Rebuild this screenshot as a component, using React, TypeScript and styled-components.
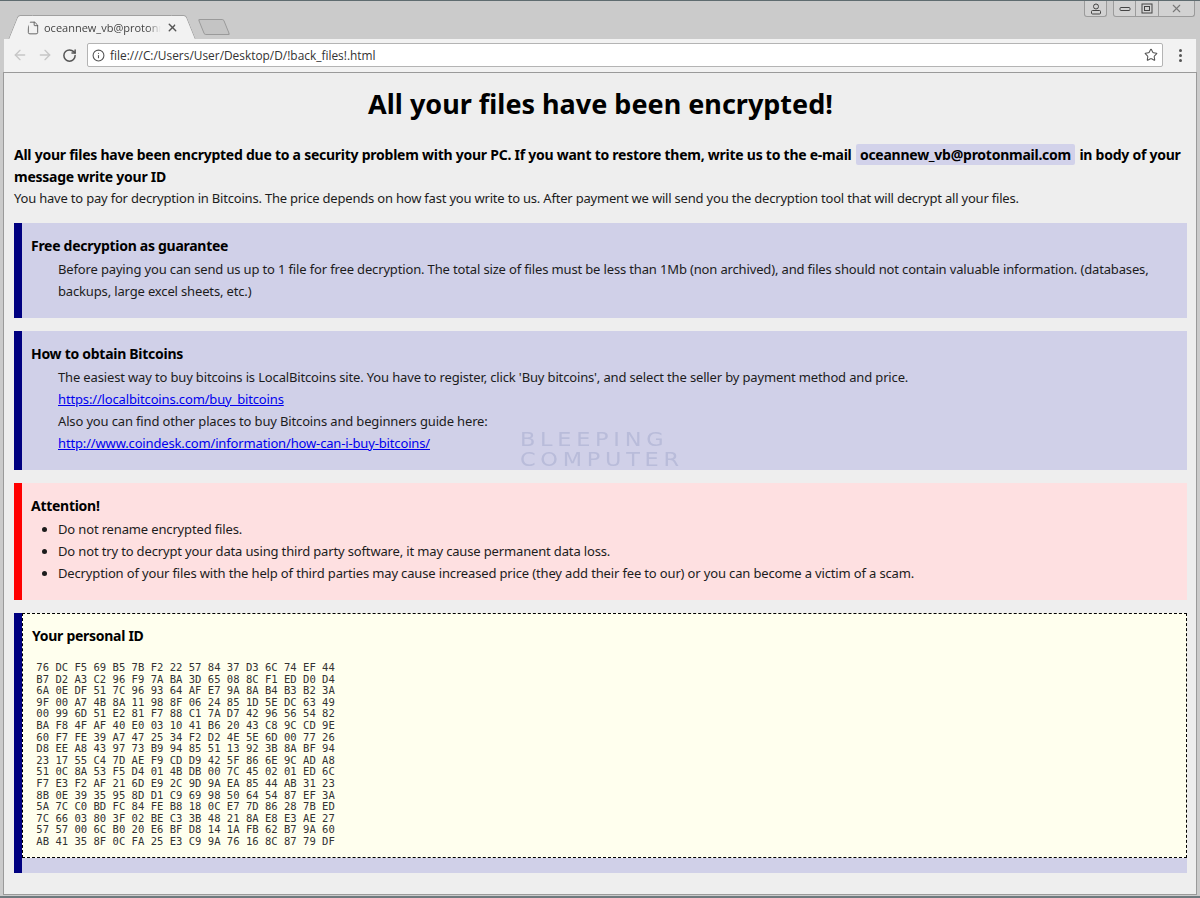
import React from 'react';
import styled, { createGlobalStyle } from 'styled-components';
import { ArrowLeft, ArrowRight, RotateCw, Info, Star, File, X } from 'lucide-react';

const GlobalStyle = createGlobalStyle`
  html, body {
    margin: 0;
    padding: 0;
    background: #cbcbcb;
  }
`;

const Window = styled.div`
  width: 1200px;
  height: 898px;
  box-sizing: border-box;
  display: flex;
  flex-direction: column;
  overflow: hidden;
  background: #cbcbcb;
  border-top: 1px solid #5f6c70;
  border-bottom: 2px solid #6f7a7e;
  font-family: "Noto Sans", sans-serif;
`;

const TitleBar = styled.div`
  height: 38px;
  flex: none;
  position: relative;
  display: flex;
  align-items: flex-end;
  padding-left: 20px;
`;

const Tab = styled.div`
  position: relative;
  width: 164px;
  height: 24px;
  box-sizing: border-box;
  display: flex;
  align-items: center;
  gap: 4px;
  padding-left: 6px;
  background: #f2f2f2;
  border-top: 1px solid #a0a0a0;
  font: 11px "Open Sans", sans-serif;
  color: #444;
  z-index: 1;

  & > svg {
    flex: none;
  }

  &::before, &::after {
    content: '';
    position: absolute;
    top: -1px;
    bottom: 0;
    width: 14px;
    background: #f2f2f2;
    border-top: 1px solid #a0a0a0;
  }
  &::before {
    left: -7px;
    transform: skewX(-22deg);
    border-left: 1px solid #a0a0a0;
    border-top-left-radius: 3px;
  }
  &::after {
    right: -7px;
    transform: skewX(22deg);
    border-right: 1px solid #a0a0a0;
    border-top-right-radius: 3px;
  }
`;

const TabTitle = styled.span`
  width: 118px;
  flex: none;
  white-space: nowrap;
  -webkit-mask-image: linear-gradient(to right, #000 88%, transparent 99%);
  mask-image: linear-gradient(to right, #000 88%, transparent 99%);
`;

const NewTab = styled.div`
  width: 24px;
  height: 14px;
  margin: 0 0 4px 17px;
  border: 1px solid #9a9a9a;
  border-radius: 2px;
  background: #c4c4c4;
  transform: skewX(22deg);
`;

const WindowControls = styled.div`
  position: absolute;
  top: 0;
  right: 5px;
  display: flex;
  gap: 6px;
`;

const ControlGroup = styled.div`
  display: flex;
  height: 15px;
  border: 1px solid #9b9b9b;
  border-top: none;
  border-radius: 0 0 3px 3px;
  background: #d2d2d2;
`;

const ControlButton = styled.div<{ $w: number }>`
  width: ${(p) => p.$w}px;
  display: flex;
  align-items: center;
  justify-content: center;
  & + & {
    border-left: 1px solid #9b9b9b;
  }
`;

const Toolbar = styled.div`
  height: 34px;
  flex: none;
  margin: 0 4px;
  box-sizing: border-box;
  display: flex;
  align-items: center;
  padding: 0 14px 1px 3px;
  background: #f2f2f2;
  border-bottom: 1px solid #a8a8a8;
`;

const NavIcons = styled.div`
  width: 80px;
  flex: none;
  display: flex;
  align-items: center;
  gap: 9px;
  padding-left: 5px;
  box-sizing: border-box;
`;

const Address = styled.div`
  flex: 1;
  height: 24px;
  box-sizing: border-box;
  display: flex;
  align-items: center;
  gap: 5px;
  padding: 0 4px;
  background: #fff;
  border: 1px solid #b4b4b4;
  border-radius: 2px;
  font: 11.9px "Open Sans", sans-serif;
  color: #333;
`;

const AddressText = styled.span`
  flex: 1;
`;

const Dots = styled.div`
  width: 3px;
  margin-left: 16px;
  display: flex;
  flex-direction: column;
  gap: 2px;
  & > i {
    width: 3px;
    height: 3px;
    border-radius: 50%;
    background: #555;
  }
`;

const Page = styled.main`
  flex: 1;
  margin: 0 4px 2px;
  box-sizing: border-box;
  padding: 13px 9px 0 10px;
  background: #eeeeee;
  color: #1c1c1c;
  font-size: 13px;
  letter-spacing: -0.15px;
  line-height: 22px;
  position: relative;
  box-shadow: 0 0 0 1px #9a9a9a;
`;

const Heading = styled.h1`
  margin: 0 0 22px;
  text-align: center;
  font-size: 27px;
  line-height: 36px;
  letter-spacing: 0;
  font-weight: bold;
  color: #000;
`;

const Lead = styled.div`
  font-size: 14px;
  letter-spacing: -0.25px;
  font-weight: bold;
  color: #000;
`;

const Mail = styled.span`
  background: #d2d2ea;
  padding: 1px 4px;
  margin: 0 1px;
  border-radius: 2px;
`;

const Note = styled.div`
  margin: -1px 0 14px;
  letter-spacing: -0.2px;
`;

const Panel = styled.section<{ $tone: 'blue' | 'red' }>`
  box-sizing: border-box;
  margin-bottom: 13px;
  padding: 11px 17px 16px 9px;
  border-left: 8px solid ${(p) => (p.$tone === 'red' ? '#ff0000' : '#000080')};
  background: ${(p) => (p.$tone === 'red' ? '#fee0e1' : '#d0d0e8')};
`;

const PanelTitle = styled.div`
  font-size: 14px;
  letter-spacing: -0.28px;
  line-height: 23px;
  font-weight: bold;
  color: #000;
`;

const Indented = styled.div`
  margin-left: 27px;
  padding-top: 1px;
`;

const BulletList = styled.ul`
  margin: 0;
  padding: 1px 0 0 27px;
`;

const Link = styled.a`
  color: #0000ee;
  text-decoration: underline;
`;

const IdPanel = styled.section`
  height: 260px;
  box-sizing: border-box;
  padding-bottom: 15px;
  border-left: 8px solid #000080;
  background: #d0d0e8;
`;

const IdBox = styled.div`
  height: 100%;
  box-sizing: border-box;
  padding: 10px 9px;
  border: 1px dashed #000;
  background: #ffffee;
`;

const IdDump = styled.pre`
  margin: 15px 0 0 -2px;
  font-family: "DejaVu Sans Mono", monospace;
  font-size: 10.56px;
  letter-spacing: 0;
  line-height: 11.6px;
  color: #333;
`;

const Watermark = styled.div`
  position: absolute;
  left: 516px;
  top: 356px;
  font-family: "DejaVu Sans", sans-serif;
  font-size: 19px;
  line-height: 20px;
  letter-spacing: 4px;
  transform: scaleX(1.18);
  transform-origin: left;
  color: rgba(165, 172, 205, 0.55);
  pointer-events: none;
`;

const ID_ROWS = [
  '76 DC F5 69 B5 7B F2 22 57 84 37 D3 6C 74 EF 44',
  'B7 D2 A3 C2 96 F9 7A BA 3D 65 08 8C F1 ED D0 D4',
  '6A 0E DF 51 7C 96 93 64 AF E7 9A 8A B4 B3 B2 3A',
  '9F 00 A7 4B 8A 11 98 8F 06 24 85 1D 5E DC 63 49',
  '00 99 6D 51 E2 81 F7 88 C1 7A D7 42 96 56 54 82',
  'BA F8 4F AF 40 E0 03 10 41 B6 20 43 C8 9C CD 9E',
  '60 F7 FE 39 A7 47 25 34 F2 D2 4E 5E 6D 00 77 26',
  'D8 EE A8 43 97 73 B9 94 85 51 13 92 3B 8A BF 94',
  '23 17 55 C4 7D AE F9 CD D9 42 5F 86 6E 9C AD A8',
  '51 0C 8A 53 F5 D4 01 4B DB 00 7C 45 02 01 ED 6C',
  'F7 E3 F2 AF 21 6D E9 2C 9D 9A EA 85 44 AB 31 23',
  '8B 0E 39 35 95 8D D1 C9 69 98 50 64 54 87 EF 3A',
  '5A 7C C0 BD FC 84 FE B8 18 0C E7 7D 86 28 7B ED',
  '7C 66 03 80 3F 02 BE C3 3B 48 21 8A E8 E3 AE 27',
  '57 57 00 6C B0 20 E6 BF D8 14 1A FB 62 B7 9A 60',
  'AB 41 35 8F 0C FA 25 E3 C9 9A 76 16 8C 87 79 DF',
];

function App() {
  return (
    <Window>
      <GlobalStyle />
      <TitleBar>
        <Tab>
          <File size={14} color="#555" strokeWidth={1.5} />
          <TabTitle>oceannew_vb@protonm</TabTitle>
          <X size={13} color="#555" strokeWidth={2.5} />
        </Tab>
        <NewTab />
        <WindowControls>
          <ControlGroup>
            <ControlButton $w={21}>
              <svg width="12" height="12" viewBox="0 0 12 12" fill="none" stroke="#444">
                <circle cx="6" cy="3.5" r="2.5" />
                <rect x="1.5" y="7.5" width="9" height="3.5" rx="1" />
              </svg>
            </ControlButton>
          </ControlGroup>
          <ControlGroup>
            <ControlButton $w={21}>
              <svg width="12" height="6" viewBox="0 0 12 6" fill="none" stroke="#444">
                <rect x="1" y="1.5" width="10" height="3" rx="1" />
              </svg>
            </ControlButton>
            <ControlButton $w={22}>
              <svg width="12" height="11" viewBox="0 0 12 11" fill="none" stroke="#444">
                <rect x="1" y="1" width="10" height="9" />
                <rect x="3.5" y="3.5" width="5" height="4" />
              </svg>
            </ControlButton>
            <ControlButton $w={35}>
              <X size={13} color="#777" strokeWidth={2} />
            </ControlButton>
          </ControlGroup>
        </WindowControls>
      </TitleBar>
      <Toolbar>
        <NavIcons>
          <ArrowLeft size={16} color="#c6c6c6" strokeWidth={2} />
          <ArrowRight size={16} color="#c6c6c6" strokeWidth={2} />
          <RotateCw size={15} color="#555" strokeWidth={2.4} />
        </NavIcons>
        <Address>
          <Info size={13} color="#555" strokeWidth={2} />
          <AddressText>file:///C:/Users/User/Desktop/D/!back_files!.html</AddressText>
          <Star size={14} color="#555" strokeWidth={1.8} />
        </Address>
        <Dots>
          <i />
          <i />
          <i />
        </Dots>
      </Toolbar>
      <Page>
        <Heading>All your files have been encrypted!</Heading>
        <Lead>
          All your files have been encrypted due to a security problem with your PC. If you want to restore them, write
          us to the e-mail <Mail>oceannew_vb@protonmail.com</Mail> in body of your message write your ID
        </Lead>
        <Note>
          You have to pay for decryption in Bitcoins. The price depends on how fast you write to us. After payment we
          will send you the decryption tool that will decrypt all your files.
        </Note>
        <Panel $tone="blue">
          <PanelTitle>Free decryption as guarantee</PanelTitle>
          <Indented>
            Before paying you can send us up to 1 file for free decryption. The total size of files must be less than
            1Mb (non archived), and files should not contain valuable information. (databases, backups, large excel
            sheets, etc.)
          </Indented>
        </Panel>
        <Panel $tone="blue">
          <PanelTitle>How to obtain Bitcoins</PanelTitle>
          <Indented>
            The easiest way to buy bitcoins is LocalBitcoins site. You have to register, click 'Buy bitcoins', and
            select the seller by payment method and price.
            <br />
            <Link href="#">https://localbitcoins.com/buy_bitcoins</Link>
            <br />
            Also you can find other places to buy Bitcoins and beginners guide here:
            <br />
            <Link href="#">http://www.coindesk.com/information/how-can-i-buy-bitcoins/</Link>
          </Indented>
        </Panel>
        <Panel $tone="red">
          <PanelTitle>Attention!</PanelTitle>
          <BulletList>
            <li>Do not rename encrypted files.</li>
            <li>Do not try to decrypt your data using third party software, it may cause permanent data loss.</li>
            <li>
              Decryption of your files with the help of third parties may cause increased price (they add their fee to
              our) or you can become a victim of a scam.
            </li>
          </BulletList>
        </Panel>
        <IdPanel>
          <IdBox>
            <PanelTitle>Your personal ID</PanelTitle>
            <IdDump>{ID_ROWS.map((r) => ` ${r}`).join('\n')}</IdDump>
          </IdBox>
        </IdPanel>
        <Watermark>
          BLEEPING
          <br />
          COMPUTER
        </Watermark>
      </Page>
    </Window>
  );
}

export default App;
